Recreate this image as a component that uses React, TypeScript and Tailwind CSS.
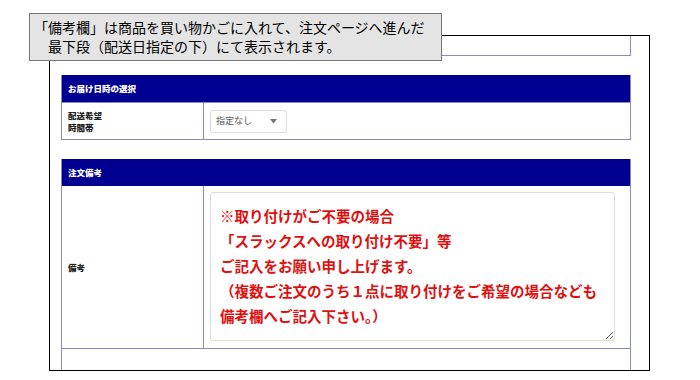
export default function App() {
  const note = [
    "※取り付けがご不要の場合",
    "「スラックスへの取り付け不要」等",
    "ご記入をお願い申し上げます。",
    "（複数ご注文のうち１点に取り付けをご希望の場合なども",
    "備考欄へご記入下さい。）",
  ].join("\n");

  return (
    <div className="relative h-[380px] w-[700px] overflow-hidden bg-white font-['Noto_Sans_CJK_JP',sans-serif]">
      {/* screenshot frame */}
      <div className="ml-[49px] mt-[35px] h-[336px] w-[601px] overflow-hidden border border-black pl-[11px]">
        {/* tail of the previous table */}
        <div className="h-[20px] w-[570px] border-x border-b border-[#8a8ac0]" />

        {/* delivery time */}
        <div className="mt-[19px] w-[570px] border-x border-b border-[#8a8ac0]">
          <div className="flex h-[27px] items-center bg-[#000090] pl-[6px] text-[8.5px] font-black text-white">
            お届け日時の選択
          </div>
          <div className="flex h-[37px] border-t border-[#8a8ac0]">
            <div className="flex w-[142px] items-center border-r border-[#8a8ac0] pl-[6px] text-[8.5px] font-black leading-[12px] text-[#222]">
              配送希望
              <br />
              時間帯
            </div>
            <div className="flex items-center pl-[6px]">
              <div className="flex h-[23px] w-[77px] items-center justify-between rounded-[3px] border border-[#dcdcdc] bg-white pl-[5px] pr-[9px] text-[9px] text-[#555]">
                <span>指定なし</span>
                <svg width="7" height="5" viewBox="0 0 7 5">
                  <path d="M0 0 L7 0 L3.5 4.5 Z" fill="#777" />
                </svg>
              </div>
            </div>
          </div>
        </div>

        {/* order note */}
        <div className="mt-[19px] w-[570px] border-x border-[#8a8ac0]">
          <div className="flex h-[27px] items-center bg-[#000090] pl-[6px] text-[8.5px] font-black text-white">
            注文備考
          </div>
          <div className="flex h-[163px] border-b border-[#8a8ac0]">
            <div className="flex w-[142px] items-center border-r border-[#8a8ac0] pl-[6px] text-[8.5px] font-black text-[#222]">
              備考
            </div>
            <div className="pl-[6px] pt-[6px]">
              <textarea
                readOnly
                defaultValue={note}
                className="block h-[149px] w-[405px] resize rounded-[3px] border border-[#dcdcdc] bg-white px-[9px] pt-[10px] font-['Noto_Sans_CJK_JP',sans-serif] text-[14.5px] font-bold leading-[25px] text-[#e01010] outline-none"
              />
            </div>
          </div>
          <div className="h-[40px]" />
        </div>
      </div>

      {/* caption overlay */}
      <div className="absolute left-[29px] top-[13px] flex h-[48px] w-[413px] flex-col justify-center border border-[#777] bg-[#e4e4e4] pl-[4px] text-[14px] leading-[19px] text-black">
        <div>「備考欄」は商品を買い物かごに入れて、注文ページへ進んだ</div>
        <div>　最下段（配送日指定の下）にて表示されます。</div>
      </div>
    </div>
  );
}
